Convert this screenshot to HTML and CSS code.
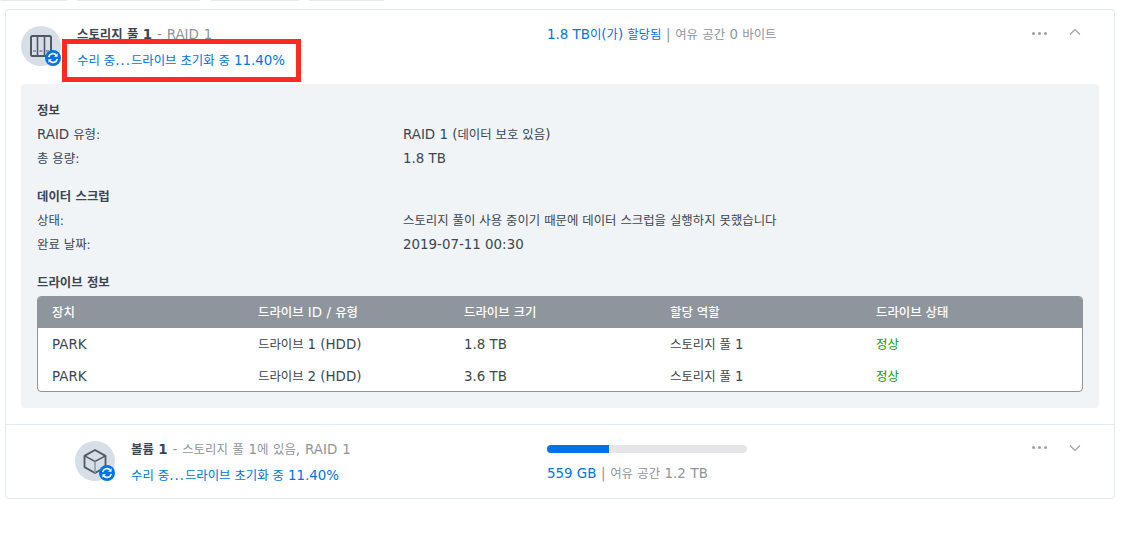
FILE: index.html
```html
<!DOCTYPE html>
<html lang="ko">
<head>
  <meta charset="UTF-8" />
  <title>저장소 관리자</title>
  <link rel="stylesheet" href="styles.css">
</head>
<body>
  <div class="tabs">
    <span class="tab tab-a"></span>
    <span class="tab tab-b"></span>
    <span class="tab tab-c"></span>
    <span class="tab tab-d"></span>
  </div>

  <div class="panel">
    <section class="pool">
      <div class="row-head pool-head">
        <div class="icon-wrap">
          <svg width="40" height="40" viewBox="0 0 40 40">
            <rect x="10" y="10" width="20" height="20" rx="1.5" fill="none" stroke="#4f5964" stroke-width="2"/>
            <path d="M16.5 10v20M23.500 10v20" stroke="#4f5964" stroke-width="1.6"/>
            <path d="M12 25h3M18.500 25h3M25 25h3" stroke="#7d8690" stroke-width="1.4"/>
          </svg>
          <span class="badge">
            <svg width="16" height="16" viewBox="0 0 16 16">
              <path d="M3.600 7.200A4.500 4.500 0 0 1 11.400 5.200M12.400 8.800A4.500 4.500 0 0 1 4.600 10.800" fill="none" stroke="#fff" stroke-width="1.600"/>
              <path d="M12.600 3.200v3.600H9zM3.400 12.800V9.200H7z" fill="#fff"/>
            </svg>
          </span>
        </div>
        <div class="title-col">
          <div class="title"><b>스토리지 풀 <span class="en">1</span></b><span class="muted en"> - RAID 1</span></div>
          <div class="status">수리 중<span class="en ellipsis">...</span>드라이브 초기화 중 <span class="en">11.40%</span></div>
        </div>
        <div class="usage-col">
          <div class="usage"><span class="blue"><span class="en">1.8 TB</span>이<span class="en">(</span>가<span class="en">)</span> 할당됨</span><span class="muted"><span class="en"> | </span>여유 공간 <span class="en">0</span> 바이트</span></div>
        </div>
        <div class="dots"><i></i><i></i><i></i></div>
        <svg class="chevron" width="12" height="8" viewBox="0 0 12 8"><path d="M1 6.500l5-5 5 5" fill="none" stroke="#9aa1a9" stroke-width="1.2"/></svg>
      </div>
      <div class="highlight"></div>

      <div class="details">
        <h4>정보</h4>
        <div class="info-row"><span><span class="en">RAID</span> 유형:</span><span><span class="en">RAID 1 (</span>데이터 보호 있음<span class="en">)</span></span></div>
        <div class="info-row"><span>총 용량:</span><span class="en">1.8 TB</span></div>

        <h4 class="gap">데이터 스크럽</h4>
        <div class="info-row"><span>상태:</span><span>스토리지 풀이 사용 중이기 때문에 데이터 스크럽을 실행하지 못했습니다</span></div>
        <div class="info-row"><span>완료 날짜:</span><span class="en">2019-07-11 00:30</span></div>

        <h4 class="gap">드라이브 정보</h4>
        <div class="drives">
          <div class="drive-row drive-top">
            <span>장치</span><span>드라이브<span class="en"> ID / </span>유형</span><span>드라이브 크기</span><span>할당 역할</span><span>드라이브 상태</span>
          </div>
          <div class="drive-row">
            <span class="en">PARK</span><span>드라이브 <span class="en">1 (HDD)</span></span><span class="en">1.8 TB</span><span>스토리지 풀 <span class="en">1</span></span><span class="ok">정상</span>
          </div>
          <div class="drive-row">
            <span class="en">PARK</span><span>드라이브 <span class="en">2 (HDD)</span></span><span class="en">3.6 TB</span><span>스토리지 풀 <span class="en">1</span></span><span class="ok">정상</span>
          </div>
        </div>
      </div>
    </section>

    <section class="volume">
      <div class="row-head volume-head">
        <div class="icon-wrap">
          <svg width="40" height="40" viewBox="0 0 40 40">
            <path d="M20 9l10.500 5.900v11.200L20 32l-10.500-5.900V14.900z" fill="none" stroke="#4f5964" stroke-width="1.800" stroke-linejoin="round"/>
            <path d="M9.500 14.900l10.500 5.600 10.500-5.600" fill="none" stroke="#4f5964" stroke-width="1.500"/>
            <path d="M20 20.500V32" stroke="#8f98a2" stroke-width="1.500"/>
          </svg>
          <span class="badge">
            <svg width="16" height="16" viewBox="0 0 16 16">
              <path d="M3.600 7.200A4.500 4.500 0 0 1 11.400 5.200M12.400 8.800A4.500 4.500 0 0 1 4.600 10.800" fill="none" stroke="#fff" stroke-width="1.600"/>
              <path d="M12.600 3.200v3.600H9zM3.400 12.800V9.200H7z" fill="#fff"/>
            </svg>
          </span>
        </div>
        <div class="title-col volume-title">
          <div class="title"><b>볼륨 <span class="en">1</span></b><span class="muted"><span class="en"> - </span>스토리지 풀 <span class="en">1</span>에 있음<span class="en">, RAID 1</span></span></div>
          <div class="status">수리 중<span class="en ellipsis">...</span>드라이브 초기화 중 <span class="en">11.40%</span></div>
        </div>
        <div class="usage-col">
          <div class="bar"><div class="bar-fill" style="width: 31%"></div></div>
          <div class="usage usage-low"><span class="blue en">559 GB</span><span class="muted"><span class="en"> | </span>여유 공간 <span class="en">1.2 TB</span></span></div>
        </div>
        <div class="dots dots-low"><i></i><i></i><i></i></div>
        <svg class="chevron chevron-low" width="12" height="8" viewBox="0 0 12 8"><path d="M1 1.500l5 5 5-5" fill="none" stroke="#9aa1a9" stroke-width="1.2"/></svg>
      </div>
    </section>
  </div>
</body>
</html>
```

FILE: styles.css
```css
* {
  margin: 0;
  padding: 0;
  box-sizing: border-box;
}

body {
  background: #ffffff;
  color: #3c4650;
  font-family: "DejaVu Sans", "Noto Sans CJK KR", sans-serif;
  font-size: 12.4px;
  line-height: 16px;
  padding: 0 8px 0 5px;
}

/* latin runs sit a bit larger than the hangul around them */
.en {
  font-size: 13.4px;
}

.ellipsis {
  letter-spacing: 1px;
}

.tabs {
  display: flex;
  height: 9px;
  margin-top: -1px;
  margin-left: -5px;
}

.tab {
  height: 2px;
  background: #e3e9f0;
  border-radius: 0 0 3px 3px;
}

.tab-a { width: 68px; margin-right: 9px; }
.tab-b { width: 124px; margin-right: 9px; }
.tab-c { width: 90px; margin-right: 9px; }
.tab-d { width: 76px; }

.panel {
  position: relative;
  width: 1110px;
  height: 490px;
  margin-top: 1px;
  border: 1px solid #e3e9f0;
  border-radius: 4px;
}

.row-head {
  display: flex;
  align-items: flex-start;
}

.pool-head {
  height: 74px;
  padding: 16px 0 0 15px;
}

.volume-head {
  height: 73px;
  padding: 16px 0 0 69px;
}

.icon-wrap {
  position: relative;
  width: 40px;
  height: 40px;
  flex: none;
  background: #d6dfe8;
  border-radius: 50%;
}

.icon-wrap > svg {
  display: block;
}

.badge {
  position: absolute;
  right: 0;
  bottom: 0;
  width: 16px;
  height: 16px;
  background: #0073e6;
  border-radius: 50%;
}

.badge svg {
  display: block;
}

.title-col {
  width: 486px;
  flex: none;
  padding: 0 0 0 16px;
}

.volume-title {
  width: 432px;
}

.title {
  height: 16px;
  margin-top: 1px;
  color: #3c4650;
}

.title b {
  font-weight: 700;
  color: #3c4650;
}

.title .muted {
  word-spacing: 0.7px;
}

.status {
  margin-top: 10px;
  color: #0073e6;
}

.usage-col {
  width: 485px;
  flex: none;
}

.usage {
  height: 16px;
  margin-top: 1px;
}

.usage .muted {
  word-spacing: 0.4px;
}

.usage-low {
  margin-top: 13px;
}

.blue {
  color: #0073e6;
}

.muted {
  color: #8e959c;
}

.bar {
  width: 200px;
  height: 8px;
  margin-top: 4px;
  background: #e6e6e8;
  border-radius: 4px;
  overflow: hidden;
}

.bar-fill {
  height: 8px;
  background: #0073e6;
}

.dots {
  display: flex;
  gap: 3px;
  width: 37px;
  flex: none;
  margin-top: 6px;
}

.dots-low {
  margin-top: 5px;
}

.dots i {
  width: 3px;
  height: 3px;
  background: #9aa1a9;
  border-radius: 50%;
}

.chevron {
  flex: none;
  margin-top: 2px;
}

.chevron-low {
  margin-top: 3px;
}

/* red annotation from the screenshot */
.highlight {
  position: absolute;
  left: 56px;
  top: 29px;
  width: 239px;
  height: 43px;
  border: 5px solid #ff2a1f;
}

.details {
  width: 1078px;
  height: 324px;
  margin-left: 15px;
  padding: 19px 16px 0;
  background: #f0f4f7;
  border-radius: 4px;
}

.details h4 {
  height: 16px;
  margin-bottom: 8px;
  font-size: 12.4px;
  font-weight: 700;
  color: #3c4650;
}

.details h4.gap {
  margin-top: 22px;
}

.info-row {
  display: flex;
  height: 16px;
  margin-bottom: 8px;
}

.info-row > span:first-child {
  width: 366px;
  flex: none;
}

.drives {
  width: 1046px;
  height: 96px;
  margin-top: -3px;
  background: #ffffff;
  border: 1px solid #8e959c;
  border-radius: 4px;
  overflow: hidden;
}

.drive-row {
  display: grid;
  grid-template-columns: repeat(5, 206px);
  align-items: center;
  height: 32px;
  padding: 1px 0 0 14px;
}

.drive-top {
  height: 31px;
  padding-top: 0;
  background: #8e959c;
  color: #ffffff;
  font-weight: 500;
}

.ok {
  color: #00a000;
}

.volume {
  border-top: 1px solid #e3e9f0;
  margin-top: 16px;
}
```
